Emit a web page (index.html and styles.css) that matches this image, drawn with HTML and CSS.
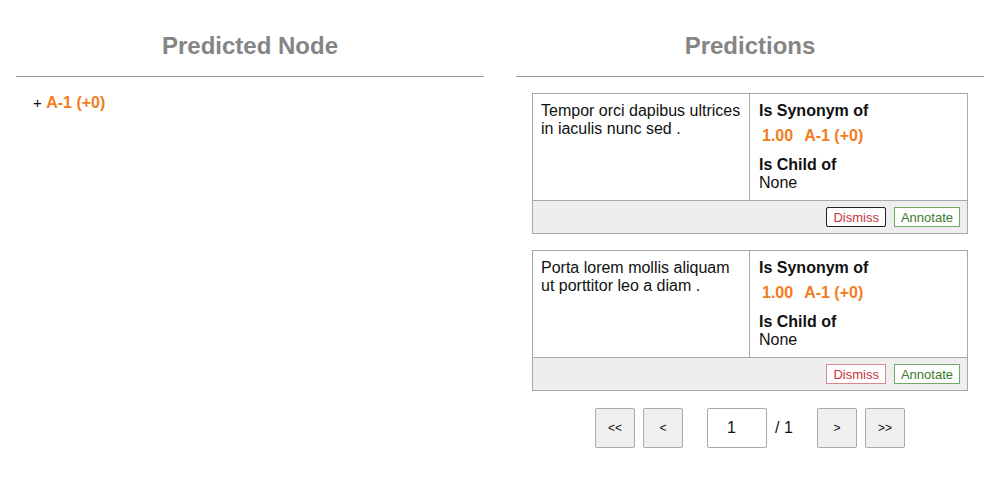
FILE: index.html
```html
<!DOCTYPE html>
<html>
<head>
<meta charset="utf-8">
<link rel="stylesheet" href="styles.css">
</head>
<body>
<div class="page">
  <section class="col">
    <h2 class="col-title">Predicted Node</h2>
    <div class="col-body left-body">
      <div class="node"><span class="plus">+</span> <span class="orange">A-1 (+0)</span></div>
    </div>
  </section>
  <section class="col">
    <h2 class="col-title">Predictions</h2>
    <div class="col-body right-body">
      <div class="card">
        <div class="card-main">
          <div class="cell text-cell">Tempor orci dapibus ultrices in iaculis nunc sed .</div>
          <div class="cell info-cell">
            <div class="label">Is Synonym of</div>
            <div class="score-row"><span class="orange">1.00</span><span class="orange">A-1 (+0)</span></div>
            <div class="label child-label">Is Child of</div>
            <div>None</div>
          </div>
        </div>
        <div class="card-actions">
          <button class="btn dismiss focused">Dismiss</button>
          <button class="btn annotate">Annotate</button>
        </div>
      </div>
      <div class="card">
        <div class="card-main">
          <div class="cell text-cell">Porta lorem mollis aliquam ut porttitor leo a diam .</div>
          <div class="cell info-cell">
            <div class="label">Is Synonym of</div>
            <div class="score-row"><span class="orange">1.00</span><span class="orange">A-1 (+0)</span></div>
            <div class="label child-label">Is Child of</div>
            <div>None</div>
          </div>
        </div>
        <div class="card-actions">
          <button class="btn dismiss">Dismiss</button>
          <button class="btn annotate">Annotate</button>
        </div>
      </div>
      <div class="pager">
        <button class="pg-btn">&lt;&lt;</button>
        <button class="pg-btn">&lt;</button>
        <input class="pg-input" type="text" value="1">
        <span class="pg-total">/ 1</span>
        <button class="pg-btn">&gt;</button>
        <button class="pg-btn">&gt;&gt;</button>
      </div>
    </div>
  </section>
</div>
</body>
</html>
```

FILE: styles.css
```css
* { box-sizing: border-box; }
html, body {
  margin: 0;
  padding: 0;
  background: #fff;
  font-family: "Liberation Sans", Arial, sans-serif;
  font-size: 16px;
  color: #111;
}
.page {
  display: grid;
  grid-template-columns: 1fr 1fr;
  column-gap: 32px;
  padding: 0 16px;
}
.col-title {
  margin: 0;
  padding: 32px 0 17px;
  line-height: 27px;
  font-size: 24px;
  font-weight: bold;
  text-align: center;
  color: #858585;
  border-bottom: 1px solid #9a9a9a;
}
.left-body {
  padding: 17px 17px;
}
.node {
  font-size: 16px;
  line-height: 18px;
}
.plus {
  font-size: 15px;
  color: #111;
}
.orange {
  color: #f47c20;
  font-weight: bold;
}
.right-body {
  padding: 16px 16px;
  display: flex;
  flex-direction: column;
  gap: 16px;
}
.card {
  border: 1px solid #a8a8a8;
}
.card-main {
  display: grid;
  grid-template-columns: 1fr 1fr;
}
.cell {
  padding: 8px 8px 8px;
  line-height: 18px;
}
.info-cell {
  padding-left: 9px;
}
.text-cell {
  border-right: 1px solid #a8a8a8;
}
.label {
  font-weight: bold;
}
.score-row {
  display: flex;
  gap: 11px;
  padding-left: 3px;
  margin: 7px 0 11px;
}
.card-actions {
  border-top: 1px solid #a8a8a8;
  background: #eeeeee;
  display: flex;
  justify-content: flex-end;
  gap: 8px;
  padding: 6px 7px 6px;
}
.btn {
  font-family: "Liberation Sans", Arial, sans-serif;
  font-size: 13px;
  line-height: 15px;
  height: 20px;
  padding: 1px 6px;
  background: #fff;
  border-radius: 0;
}
.dismiss {
  color: #c8323a;
  border: 1px solid #d98a8e;
}
.dismiss.focused {
  border: 1px solid #d98a8e;
  outline: 1.5px solid #222;
  outline-offset: -1px;
  border-radius: 2px;
}
.annotate {
  color: #3d7a2b;
  border: 1px solid #72a965;
}
.pager {
  display: flex;
  justify-content: center;
  align-items: center;
  gap: 8px;
  margin-top: 1px;
}
.pg-btn {
  width: 40px;
  height: 40px;
  background: #efefef;
  border: 1px solid #a9a9a9;
  border-radius: 2px;
  font-family: "Liberation Sans", Arial, sans-serif;
  font-size: 12px;
  color: #111;
  padding: 0;
}
.pg-input {
  width: 60px;
  height: 40px;
  margin-left: 16px;
  border: 1px solid #a9a9a9;
  border-radius: 2px;
  text-align: left;
  font-family: "Liberation Sans", Arial, sans-serif;
  font-size: 16px;
  color: #111;
  padding: 0 0 0 19px;
}
.pg-total {
  font-size: 16px;
  margin-right: 16px;
}
```
